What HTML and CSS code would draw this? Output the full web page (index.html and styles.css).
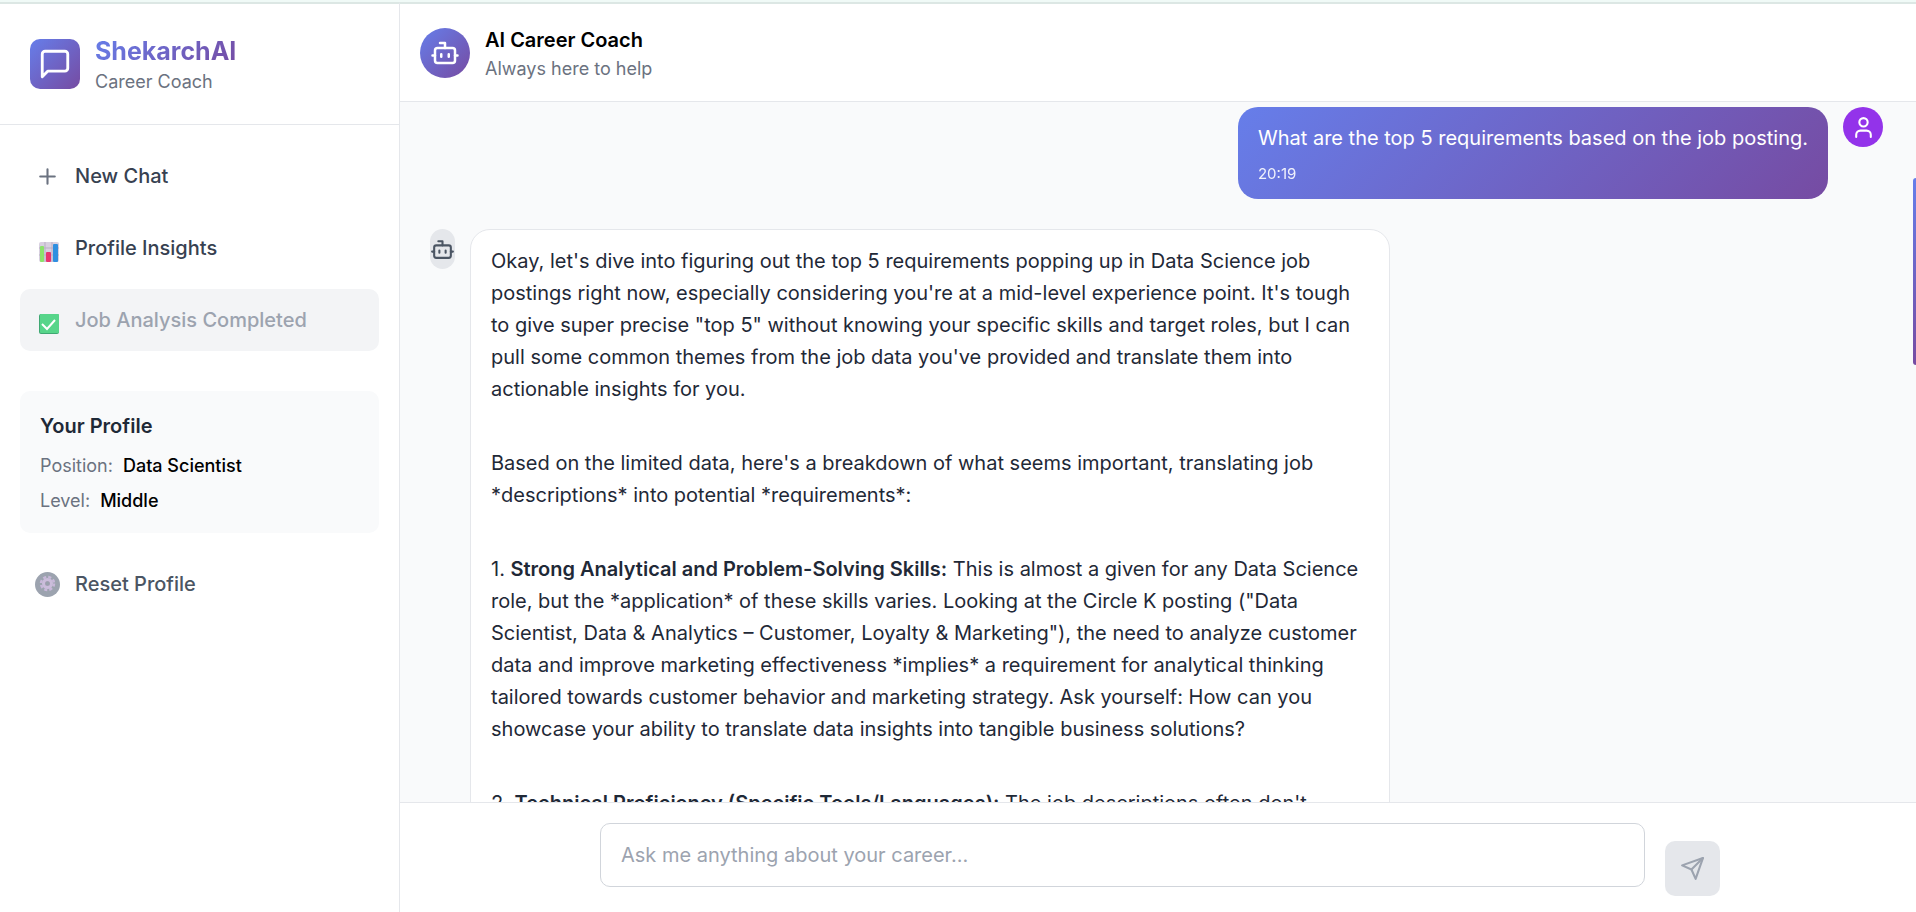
FILE: index.html
```html
<!DOCTYPE html>
<html lang="en">
<head>
  <meta charset="UTF-8" />
  <meta name="viewport" content="width=device-width, initial-scale=1.0" />
  <title>ShekarchAI - Career Coach</title>
  <link rel="stylesheet" href="styles.css">
</head>
<body>
  <div class="app">
    <!-- Sidebar -->
    <aside class="sidebar">
      <div class="brand">
        <div class="brand-logo">
          <svg class="icon icon-xl" viewBox="0 0 24 24"><path d="M21 15a2 2 0 0 1-2 2H7l-4 4V5a2 2 0 0 1 2-2h14a2 2 0 0 1 2 2z"/></svg>
        </div>
        <div>
          <h1>ShekarchAI</h1>
          <p>Career Coach</p>
        </div>
      </div>

      <nav class="menu">
        <button type="button" class="menu-btn">
          <svg class="icon icon-md muted" viewBox="0 0 24 24"><path d="M5 12h14M12 5v14"/></svg>
          <span>New Chat</span>
        </button>
        <button type="button" class="menu-btn">
          <svg class="emoji" viewBox="0 0 25 30">
            <rect x="4" y="9" width="20" height="20" rx="2" fill="#d8d0e0"/>
            <path d="M4 15h20M4 22h20M10 9v20M17 9v20" stroke="#b9afc4" stroke-width="1"/>
            <rect x="5" y="13" width="4" height="16" rx="1" fill="#8be36b"/>
            <rect x="11" y="19" width="5" height="10" rx="1" fill="#e8356f"/>
            <rect x="18" y="11" width="5" height="18" rx="1" fill="#2f8fe0"/>
          </svg>
          <span>Profile Insights</span>
        </button>
        <button type="button" class="menu-btn" disabled>
          <svg class="emoji" viewBox="0 0 25 30">
            <rect x="4" y="9" width="20" height="20" rx="2" fill="#3fa873"/>
            <rect x="5" y="9" width="19" height="19" rx="1" fill="#57d58a"/>
            <path d="M7 19l5 5 8-9" fill="none" stroke="#fff" stroke-width="2"/>
          </svg>
          <span>Job Analysis Completed</span>
        </button>
      </nav>

      <section class="profile">
        <h2>Your Profile</h2>
        <dl>
          <div><dt>Position:</dt><dd>Data Scientist</dd></div>
          <div><dt>Level:</dt><dd>Middle</dd></div>
        </dl>
      </section>

      <div class="sidebar-end">
        <button type="button" class="menu-btn reset-btn">
          <svg class="gear" viewBox="0 0 50 50">
            <circle cx="25" cy="25" r="25" fill="#9ca3af"/>
            <circle cx="25" cy="23" r="13" fill="none" stroke="#c9b8da" stroke-width="5" stroke-dasharray="6 4.2"/>
            <circle cx="25" cy="23" r="8" fill="#a99fb6" stroke="#cbbddb" stroke-width="6"/>
            <circle cx="25" cy="23" r="4" fill="#99a0ac"/>
          </svg>
          <span>Reset Profile</span>
        </button>
      </div>
    </aside>

    <!-- Chat -->
    <main class="chat">
      <header class="chat-header">
        <div class="coach-avatar">
          <svg class="icon icon-lg" viewBox="0 0 24 24"><path d="M12 8V4H8"/><rect x="4" y="8" width="16" height="12" rx="2"/><path d="M2 14h2M20 14h2M15 13v2M9 13v2"/></svg>
        </div>
        <div class="coach-text">
          <h2>AI Career Coach</h2>
          <p>Always here to help</p>
        </div>
      </header>

      <div class="messages">
        <div class="message user">
          <div class="bubble">
            <p>What are the top 5 requirements based on the job posting.</p>
            <time>20:19</time>
          </div>
          <div class="avatar">
            <svg class="icon icon-md" viewBox="0 0 24 24"><path d="M19 21v-2a4 4 0 0 0-4-4H9a4 4 0 0 0-4 4v2"/><circle cx="12" cy="7" r="4"/></svg>
          </div>
        </div>

        <div class="message bot">
          <div class="avatar">
            <svg class="icon icon-md" viewBox="0 0 24 24"><path d="M12 8V4H8"/><rect x="4" y="8" width="16" height="12" rx="2"/><path d="M2 14h2M20 14h2M15 13v2M9 13v2"/></svg>
          </div>
          <div class="bubble">
            <p>Okay, let's dive into figuring out the top 5 requirements popping up in Data Science job postings right now, especially considering you're at a mid-level experience point. It's tough to give super precise "top 5" without knowing your specific skills and target roles, but I can pull some common themes from the job data you've provided and translate them into actionable insights for you.</p>
            <p>Based on the limited data, here's a breakdown of what seems important, translating job *descriptions* into potential *requirements*:</p>
            <p>1. <strong>Strong Analytical and Problem-Solving Skills:</strong> This is almost a given for any Data Science role, but the *application* of these skills varies. Looking at the Circle K posting ("Data Scientist, Data &amp; Analytics – Customer, Loyalty &amp; Marketing"), the need to analyze customer data and improve marketing effectiveness *implies* a requirement for analytical thinking tailored towards customer behavior and marketing strategy. Ask yourself: How can you showcase your ability to translate data insights into tangible business solutions?</p>
            <p>2. <strong>Technical Proficiency (Specific Tools/Languages):</strong> The job descriptions often don't</p>
          </div>
        </div>
        <div class="scroll-thumb"></div>
      </div>

      <footer class="composer">
        <form>
          <textarea rows="1" aria-label="Message" placeholder="Ask me anything about your career..."></textarea>
          <button type="button" aria-label="Send" disabled>
            <svg class="icon icon-md" viewBox="0 0 24 24"><path d="m22 2-7 20-4-9-9-4Z"/><path d="M22 2 11 13"/></svg>
          </button>
        </form>
      </footer>
    </main>
  </div>
</body>
</html>
```
FILE: styles.css
```css
/* Global Styles */
* {
  box-sizing: border-box;
}
body {
  margin: 0;
  font-family: Inter, sans-serif;
  font-size: 20px;
  line-height: 30px;
  color: #000;
  background: #fff;
}
h1, h2, p, dl, dd {
  margin: 0;
}
button, textarea {
  font: inherit;
}
.app {
  display: flex;
  height: 100vh;
  overflow: hidden;
  border-top: 2px solid #f0faf7;
}
.icon {
  fill: none;
  stroke: currentColor;
  stroke-width: 2;
  stroke-linecap: round;
  stroke-linejoin: round;
  flex-shrink: 0;
}
.icon-md {
  width: 25px;
  height: 25px;
}
.icon-lg {
  width: 30px;
  height: 30px;
}
.icon-xl {
  width: 34px;
  height: 34px;
}

/* Sidebar */
.sidebar {
  width: 400px;
  flex-shrink: 0;
  border-top: 2px solid #dce7e4;
  border-right: 1px solid #e5e7eb;
}
.brand {
  display: flex;
  align-items: center;
  gap: 15px;
  padding: 30px;
  border-bottom: 1px solid #e5e7eb;
}
.brand-logo {
  display: flex;
  align-items: center;
  justify-content: center;
  width: 50px;
  height: 50px;
  border-radius: 10px;
  color: #fff;
  background: linear-gradient(135deg, #667eea, #764ba2);
}
.brand h1 {
  font-size: 25px;
  line-height: 35px;
  font-weight: 700;
  color: transparent;
  background: linear-gradient(135deg, #667eea, #764ba2);
  background-clip: text;
  -webkit-background-clip: text;
}
.brand p {
  font-size: 18px;
  line-height: 25px;
  color: #6b7280;
}
.menu {
  display: flex;
  flex-direction: column;
  gap: 10px;
  padding: 20px;
}
.menu-btn {
  display: flex;
  align-items: center;
  gap: 15px;
  width: 100%;
  height: 62px;
  padding: 0 15px;
  border: none;
  border-radius: 10px;
  background: none;
  color: #374151;
  font-weight: 500;
  text-align: left;
  cursor: pointer;
}
.menu-btn:disabled {
  background: #f3f4f6;
  color: #9ca3af;
  cursor: default;
}
.menu-btn .muted {
  color: #6b7280;
}
.emoji {
  width: 25px;
  height: 30px;
}
.gear {
  width: 25px;
  height: 25px;
}
.profile {
  margin: 20px;
  padding: 20px;
  border-radius: 10px;
  background: #f9fafb;
}
.profile h2 {
  margin-bottom: 12px;
  font-size: 20px;
  font-weight: 600;
  color: #1f2937;
}
.profile dl {
  display: flex;
  flex-direction: column;
  gap: 10px;
  font-size: 18px;
  line-height: 25px;
}
.profile dl div {
  display: flex;
  gap: 10px;
}
.profile dt {
  color: #6b7280;
}
.profile dd {
  font-weight: 500;
}
.sidebar-end {
  padding: 0 20px;
}
.reset-btn {
  color: #4b5563;
}

/* Chat */
.chat {
  flex: 1;
  min-width: 0;
  display: flex;
  flex-direction: column;
  border-top: 2px solid #dce7e4;
}
.chat-header {
  display: flex;
  align-items: center;
  gap: 15px;
  padding: 20px;
  border-bottom: 1px solid #e5e7eb;
}
.coach-avatar {
  display: flex;
  align-items: center;
  justify-content: center;
  width: 50px;
  height: 50px;
  border-radius: 50%;
  color: #fff;
  background: linear-gradient(135deg, #667eea, #764ba2);
}
.coach-text h2 {
  font-size: 20px;
  line-height: 32px;
  font-weight: 600;
}
.coach-text p {
  font-size: 18px;
  line-height: 25px;
  color: #6b7280;
}
.messages {
  position: relative;
  flex: 1;
  min-height: 0;
  overflow: hidden;
  display: flex;
  flex-direction: column;
  gap: 30px;
  padding: 5px 33px 0 30px;
  background: #f9fafb;
}
.message {
  display: flex;
  align-items: flex-start;
  gap: 15px;
  flex-shrink: 0;
}
.message.user {
  justify-content: flex-end;
}
.avatar {
  display: flex;
  align-items: center;
  justify-content: center;
  height: 40px;
  border-radius: 20px;
  flex-shrink: 0;
}
.user .avatar {
  width: 40px;
  color: #fff;
  background: #9333ea;
}
.bot .avatar {
  width: 25px;
  color: #4b5563;
  background: #e5e7eb;
}
.bubble {
  max-width: 920px;
  padding: 15px 20px;
  border-radius: 20px;
  line-height: 32px;
}
.user .bubble {
  color: #fff;
  background: linear-gradient(135deg, #667eea, #764ba2);
}
.bubble time {
  display: block;
  margin-top: 10px;
  font-size: 15px;
  line-height: 20px;
  opacity: 0.9;
}
.bot .bubble {
  border: 1px solid #e5e7eb;
  color: #1f2937;
  background: #fff;
}
.bot .bubble p + p {
  margin-top: 42px;
}
.bubble strong {
  font-weight: 600;
}
.scroll-thumb {
  position: absolute;
  top: 76px;
  right: 0;
  width: 3px;
  height: 187px;
  border-radius: 3px 0 0 3px;
  background: linear-gradient(#667eea, #764ba2);
}

/* Message Input */
.composer {
  padding: 20px 20px 16px 24px;
  border-top: 1px solid #e5e7eb;
}
.composer form {
  display: flex;
  gap: 20px;
  max-width: 1120px;
  margin: 0 auto;
}
.composer textarea {
  flex: 1;
  height: 64px;
  margin-bottom: 9px;
  padding: 16px 20px;
  border: 1px solid #d1d5db;
  border-radius: 10px;
  resize: none;
  outline: none;
  overflow: hidden;
}
.composer textarea::placeholder {
  color: #9ca3af;
}
.composer button {
  display: flex;
  align-items: center;
  justify-content: center;
  align-self: flex-end;
  width: 55px;
  height: 55px;
  padding: 0;
  border: none;
  border-radius: 10px;
  color: #9ca3af;
  background: #e5e7eb;
}
```
